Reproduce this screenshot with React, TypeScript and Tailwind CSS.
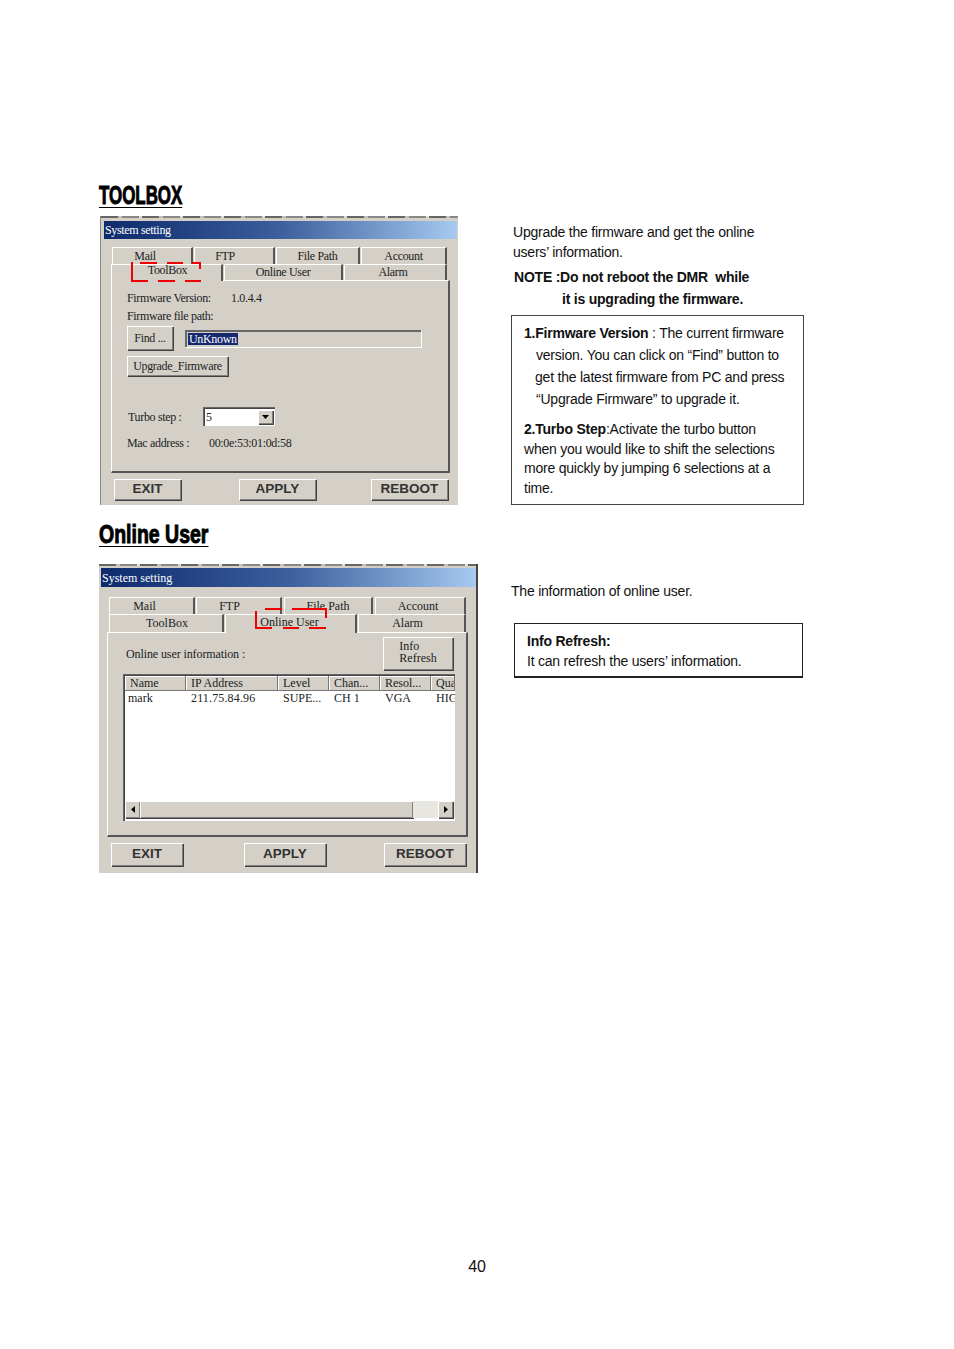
import React from 'react';

const serif = 'font-["Liberation_Serif",serif] text-[12px] leading-[14px] text-[#222]';
const sans = 'font-["Liberation_Sans",Arial,sans-serif]';
const bevel = 'bg-[#d4d0c8] shadow-[inset_1px_1px_0_#fff,inset_-1px_-1px_0_#808080,1px_1px_0_#404040]';
const sunken = 'shadow-[inset_1px_1px_0_#666,inset_2px_2px_0_#444,inset_-1px_-1px_0_#fff]';

const Heading = ({ children, scale }: { children: React.ReactNode; scale: string }) => (
  <div className="h-[24px] w-[120px]">
    <div className={`${sans} ${scale} inline-block origin-top-left border-b border-black text-[26px] font-bold leading-[23px] tracking-normal whitespace-nowrap text-black [-webkit-text-stroke:1px_black]`}>
      {children}
    </div>
  </div>
);

const Tab = ({ w, label, active, labelClass = '' }: { w: string; label: string; active?: boolean; labelClass?: string }) => (
  <div className={`${w} ${active ? 'relative z-10 -mb-px' : ''} ${serif} flex items-center justify-center border-t border-l border-t-white border-l-white border-r-2 border-r-[#555] bg-[#d4d0c8]`}>
    <span className={labelClass}>{label}</span>
  </div>
);

const WinButton = ({ w, h, label }: { w: string; h: string; label: string }) => (
  <div className={`${w} ${h} ${bevel} ${sans} flex items-center justify-center text-[13.5px] font-bold tracking-normal text-[#333]`}>
    {label}
  </div>
);

const SmallButton = ({ className, children }: { className: string; children: React.ReactNode }) => (
  <div className={`${className} ${bevel} ${serif} flex items-center justify-center`}>{children}</div>
);

const Chrome = ({ titleClass, children, className }: { titleClass: string; children: React.ReactNode; className: string }) => (
  <div className={`relative bg-[#d4d0c8] ${className}`}>
    <div className="h-[2px] bg-[repeating-linear-gradient(90deg,#666_0_17px,#c4c0b8_17px_21px,#888_21px_38px,#e0ddd6_38px_41px)]" />
    <div className={`${titleClass} flex items-center bg-gradient-to-r from-[#0e2a6c] via-[#3d5f9c] to-[#a6caf0] font-["Liberation_Serif",serif] text-[12px] text-white`}>
      <span className="pl-px">System setting</span>
    </div>
    {children}
  </div>
);

const ToolboxWindow = () => (
  <Chrome className="h-[289px] w-[358px] border-l border-l-[#8a8a80] tracking-[-0.33px]" titleClass="mt-[3px] ml-[3px] h-[18px] w-[353px]">
    <svg className="absolute top-[46px] left-[30px] z-20" viewBox="0 0 70 20" width="70" height="20" fill="none" stroke="#f00000" strokeWidth="2">
      <path d="M1 0V20M9 1H26M36 1H52M61 1H70M69 0V7M69 18V20M0 19H17M27 19H44M54 19H70" />
    </svg>
    <div className="mt-[8px] ml-[11px] flex h-[17px] gap-px">
      <Tab w="w-[81px]" label="Mail" labelClass="-translate-x-[7px]" />
      <Tab w="w-[81px]" label="FTP" labelClass="-translate-x-[9px]" />
      <Tab w="w-[84px]" label="File Path" />
      <Tab w="w-[86px]" label="Account" />
    </div>
    <div className="ml-[10px] flex h-[16px] gap-px">
      <Tab w="w-[112px]" label="ToolBox" active labelClass="-mt-[7px] translate-x-px" />
      <Tab w="w-[119px]" label="Online User" labelClass="-mt-px" />
      <Tab w="w-[103px]" label="Alarm" labelClass="-mt-px -translate-x-[2px]" />
    </div>
    <div className={`${serif} ml-[10px] h-[193px] w-[339px] border-t border-l border-t-white border-l-white border-r-2 border-b-2 border-r-[#555] border-b-[#555] pt-[10px] pl-[15px]`}>
      <div className="flex h-[14px]">
        <span className="w-[104px]">Firmware Version:</span>
        <span>1.0.4.4</span>
      </div>
      <div className="mt-[4px] h-[14px]">Firmware file path:</div>
      <div className="mt-[3px] flex items-center">
        <SmallButton className="h-[24px] w-[46px]">Find ...</SmallButton>
        <div className="ml-[12px] flex h-[17px] w-[236px] items-center border-t-2 border-l-2 border-t-[#666] border-l-[#666] shadow-[1px_1px_0_#fff]">
          <span className="ml-px bg-[#16286e] px-px leading-[12px] text-white">UnKnown</span>
        </div>
      </div>
      <SmallButton className="mt-[6px] h-[20px] w-[101px]">Upgrade_Firmware</SmallButton>
      <div className="mt-[31px] flex items-center">
        <span className="ml-px w-[75px]">Turbo step :</span>
        <div className={`flex h-[19px] w-[72px] items-center justify-between bg-white pr-[2px] pl-[3px] ${sunken}`}>
          <span>5</span>
          <div className={`${bevel} flex h-[14px] w-[15px] items-center justify-center`}>
            <svg width="7" height="4" viewBox="0 0 7 4"><path d="M0 0h7L3.500 4z" fill="#000" /></svg>
          </div>
        </div>
      </div>
      <div className="mt-[10px] flex">
        <span className="w-[82px]">Mac address :</span>
        <span>00:0e:53:01:0d:58</span>
      </div>
    </div>
    <div className="mt-[6px] ml-[13px] flex">
      <WinButton w="w-[67px]" h="h-[21px]" label="EXIT" />
      <WinButton w="ml-[58px] w-[77px]" h="h-[21px]" label="APPLY" />
      <WinButton w="ml-[55px] w-[77px]" h="h-[21px]" label="REBOOT" />
    </div>
  </Chrome>
);

const columns = [
  { w: 'w-[61px]', head: 'Name', cell: 'mark', cellClass: '-ml-[2px]' },
  { w: 'w-[92px]', head: 'IP Address', cell: '211.75.84.96', cellClass: 'tracking-[0.15px]' },
  { w: 'w-[51px]', head: 'Level', cell: 'SUPE...', cellClass: '' },
  { w: 'w-[51px]', head: 'Chan...', cell: 'CH 1', cellClass: '' },
  { w: 'w-[51px]', head: 'Resol...', cell: 'VGA', cellClass: '' },
  { w: 'w-[24px]', head: 'Qua', cell: 'HIGH', cellClass: '' },
];

const OnlineUserWindow = () => (
  <Chrome className="h-[309px] w-[379px] border-r-2 border-r-[#444] tracking-normal" titleClass="mt-[2px] ml-[2px] h-[19px] w-[375px]">
    <svg className="absolute top-[44px] left-[156px] z-20" viewBox="0 0 72 21" width="72" height="21" fill="none" stroke="#f00000" strokeWidth="2">
      <path d="M10 1H27M37 1H72M71 0V10M1 3V21M1 20H17M28 20H44M54 20H71" />
    </svg>
    <div className="mt-[10px] ml-[10px] flex h-[17px] gap-px">
      <Tab w="w-[86px]" label="Mail" labelClass="-translate-x-[7px]" />
      <Tab w="w-[86px]" label="FTP" labelClass="-translate-x-[9px]" />
      <Tab w="ml-px w-[89px]" label="File Path" />
      <Tab w="ml-px w-[91px]" label="Account" labelClass="-translate-x-[2px]" />
    </div>
    <div className="ml-[10px] flex h-[18px] gap-px">
      <Tab w="w-[115px]" label="ToolBox" labelClass="-mt-[2px] translate-x-px" />
      <Tab w="w-[132px]" label="Online User" active labelClass="-mt-[5px] -translate-x-px" />
      <Tab w="w-[108px]" label="Alarm" labelClass="-mt-[2px] -translate-x-[4px]" />
    </div>
    <div className={`${serif} ml-[8px] h-[205px] w-[361px] border-t border-l border-t-white border-l-white border-r-2 border-b-2 border-r-[#555] border-b-[#555] pt-[3px] pl-[15px]`}>
      <div className="flex h-[34px] items-center justify-between pr-[13px]">
        <span className="mt-[2px] ml-[3px] tracking-[-0.1px]">Online user information :</span>
        <SmallButton className="h-[33px] w-[70px]">
          <span className="-mt-[2px] block text-left leading-[12px]">Info<br />Refresh</span>
        </SmallButton>
      </div>
      <div className={`mt-[4px] h-[147px] w-[332px] overflow-hidden pt-[2px] pl-[2px] ${sunken} bg-white`}>
        <div className="flex h-[15px] bg-[#d4d0c8]">
          {columns.map((c) => (
            <div key={c.head} className={`${c.w} overflow-hidden whitespace-nowrap border-r border-b border-r-[#777] border-b-[#777] pl-[5px] shadow-[inset_1px_1px_0_#fff]`}>
              {c.head}
            </div>
          ))}
        </div>
        <div className="flex h-[110px]">
          {columns.map((c) => (
            <div key={c.head} className={`${c.w} overflow-hidden whitespace-nowrap pl-[5px]`}>
              <span className={`block ${c.cellClass}`}>{c.cell}</span>
            </div>
          ))}
        </div>
        <div className="flex h-[17px] items-stretch bg-[#e6e4de]">
          <div className={`${bevel} flex w-[15px] items-center justify-center`}>
            <svg width="4" height="7" viewBox="0 0 4 7"><path d="M4 0v7L0 3.500z" fill="#000" /></svg>
          </div>
          <div className={`${bevel} w-[273px]`} />
          <div className="w-[25px] bg-[#e8e6e0]" />
          <div className={`${bevel} flex w-[15px] items-center justify-center`}>
            <svg width="4" height="7" viewBox="0 0 4 7"><path d="M0 0v7L4 3.500z" fill="#000" /></svg>
          </div>
        </div>
      </div>
    </div>
    <div className="mt-[6px] ml-[12px] flex">
      <WinButton w="w-[72px]" h="h-[23px]" label="EXIT" />
      <WinButton w="ml-[61px] w-[82px]" h="h-[23px]" label="APPLY" />
      <WinButton w="ml-[58px] w-[82px]" h="h-[23px]" label="REBOOT" />
    </div>
  </Chrome>
);

export default function App() {
  return (
    <div className={`${sans} relative h-[1349px] w-[954px] overflow-hidden bg-white pt-[184px] text-[14px] tracking-[-0.22px] text-[#111]`}>
      <div className="flex h-[321px] pl-[99px]">
        <div className="w-[412px]">
          <Heading scale="scale-x-[0.65]">TOOLBOX</Heading>
          <div className="ml-px mt-[8px]">
            <ToolboxWindow />
          </div>
        </div>
        <div className="w-[293px] pt-[38px] leading-[20px]">
          <p className="ml-[2px] h-[20px] whitespace-nowrap">Upgrade the firmware and get the online</p>
          <p className="ml-[2px] h-[20px] whitespace-nowrap">users’ information.</p>
          <p className="ml-[3px] mt-[4px] h-[22px] font-bold leading-[22px] whitespace-nowrap">NOTE :Do not reboot the DMR&nbsp; while</p>
          <p className="ml-[51px] h-[22px] font-bold leading-[22px] whitespace-nowrap">it is upgrading the firmware.</p>
          <div className="mt-[5px] h-[190px] w-[293px] border border-[#444] pt-[6px] pl-[12px]">
            <div className="leading-[22px] whitespace-nowrap">
              <p><b>1.Firmware Version</b> : The current firmware</p>
              <p className="pl-[12px]">version. You can click on “Find” button to</p>
              <p className="pl-[11px]">get the latest firmware from PC and press</p>
              <p className="pl-[12px]">“Upgrade Firmware” to upgrade it.</p>
            </div>
            <div className="mt-[10px] leading-[19.7px] whitespace-nowrap">
              <p><b>2.Turbo Step</b>:Activate the turbo button</p>
              <p>when you would like to shift the selections</p>
              <p>more quickly by jumping 6 selections at a</p>
              <p>time.</p>
            </div>
          </div>
        </div>
      </div>
      <div className="mt-[18px] flex pl-[99px]">
        <div className="w-[412px]">
          <Heading scale="scale-x-[0.75]">Online User</Heading>
          <div className="mt-[17px]">
            <OnlineUserWindow />
          </div>
        </div>
        <div className="pt-[58px]">
          <p className="h-[20px] leading-[20px] whitespace-nowrap">The information of online user.</p>
          <div className="mt-[22px] ml-[3px] h-[55px] w-[289px] border border-b-2 border-[#222] pt-[7px] pl-[12px] leading-[20px]">
            <p className="font-bold">Info Refresh:</p>
            <p>It can refresh the users’ information.</p>
          </div>
        </div>
      </div>
      <div className="mt-[385px] text-center text-[16px] leading-[18px]">40</div>
    </div>
  );
}
